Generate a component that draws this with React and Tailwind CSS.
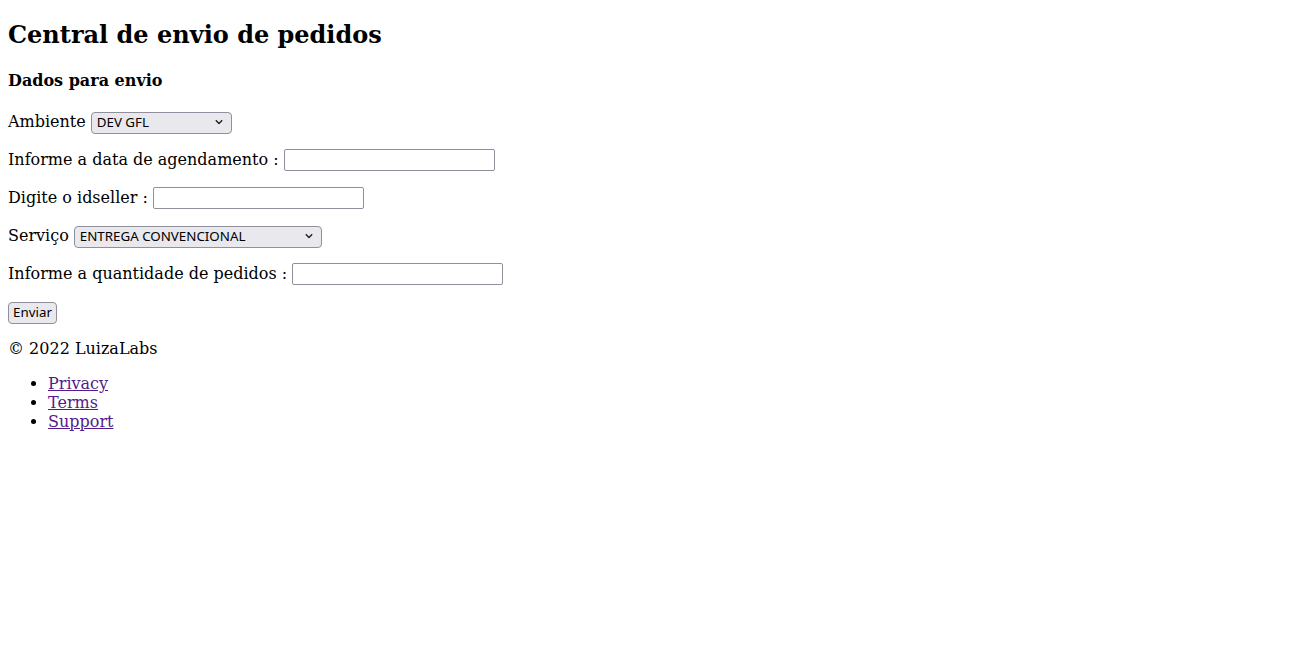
import { useState } from "react";

function Chevron() {
  return (
    <svg
      className="pointer-events-none absolute right-[9px] top-1/2 -translate-y-1/2"
      width="8"
      height="5"
      viewBox="0 0 8 5"
      fill="none"
    >
      <path d="M0.8 0.8L4 4l3.2-3.2" stroke="#1a1a1a" strokeWidth="1.3" />
    </svg>
  );
}

function Select({ width, value, options, onChange }) {
  return (
    <span className="relative inline-block align-middle">
      <select
        value={value}
        onChange={(e) => onChange(e.target.value)}
        className={`${width} h-[22px] appearance-none rounded-[4px] border border-[#8f8f9d] bg-[#e9e9ed] pl-[5px] pr-5 text-[13.33px] text-black font-['Noto_Sans',sans-serif] leading-none`}
      >
        {options.map((o) => (
          <option key={o}>{o}</option>
        ))}
      </select>
      <Chevron />
    </span>
  );
}

function TextInput({ value, onChange }) {
  return (
    <input
      type="text"
      value={value}
      onChange={(e) => onChange(e.target.value)}
      className="h-[22px] w-[211px] rounded-[2px] border border-[#8f8f9d] bg-white px-1 align-middle text-[13.33px] font-['Noto_Sans',sans-serif]"
    />
  );
}

export default function App() {
  const [ambiente, setAmbiente] = useState("DEV GFL");
  const [data, setData] = useState("");
  const [idseller, setIdseller] = useState("");
  const [servico, setServico] = useState("ENTREGA CONVENCIONAL");
  const [qtd, setQtd] = useState("");

  return (
    <div className="min-h-screen bg-white px-2 text-base text-black font-['DejaVu_Serif',serif]">
      <h1 className="mt-[21px] mb-[20px] text-[24px] font-bold leading-[28px]">
        Central de envio de pedidos
      </h1>
      <h4 className="mt-[22px] mb-[21px] text-base font-bold leading-[19px]">
        Dados para envio
      </h4>

      <form onSubmit={(e) => e.preventDefault()}>
        <p className="mt-[21px] mb-4 flex h-[22px] items-center gap-[5px]">
          Ambiente
          <Select
            width="w-[141px]"
            value={ambiente}
            options={["DEV GFL", "HML GFL", "PROD GFL"]}
            onChange={setAmbiente}
          />
        </p>
        <p className="my-4 flex h-[22px] items-center gap-[5px]">
          Informe a data de agendamento :
          <TextInput value={data} onChange={setData} />
        </p>
        <p className="my-4 flex h-[22px] items-center gap-[5px]">
          Digite o idseller :
          <TextInput value={idseller} onChange={setIdseller} />
        </p>
        <p className="my-4 flex h-[22px] items-center gap-[5px]">
          Serviço
          <Select
            width="w-[248px]"
            value={servico}
            options={["ENTREGA CONVENCIONAL", "ENTREGA EXPRESSA"]}
            onChange={setServico}
          />
        </p>
        <p className="mt-4 mb-[15px] flex h-[22px] items-center gap-[5px]">
          Informe a quantidade de pedidos :
          <TextInput value={qtd} onChange={setQtd} />
        </p>
        <button
          type="submit"
          className="h-[22px] w-[49px] rounded-[4px] border border-[#8f8f9d] bg-[#e9e9ed] text-[13.33px] font-['Noto_Sans',sans-serif]"
        >
          Enviar
        </button>
      </form>

      <footer>
        <p className="mt-[15px] mb-4 leading-[19px]">© 2022 LuizaLabs</p>
        <ul className="list-disc pl-10 leading-[19px]">
          <li>
            <a href="#" className="text-[#551a8b] underline">
              Privacy
            </a>
          </li>
          <li>
            <a href="#" className="text-[#551a8b] underline">
              Terms
            </a>
          </li>
          <li>
            <a href="#" className="text-[#551a8b] underline">
              Support
            </a>
          </li>
        </ul>
      </footer>
    </div>
  );
}
